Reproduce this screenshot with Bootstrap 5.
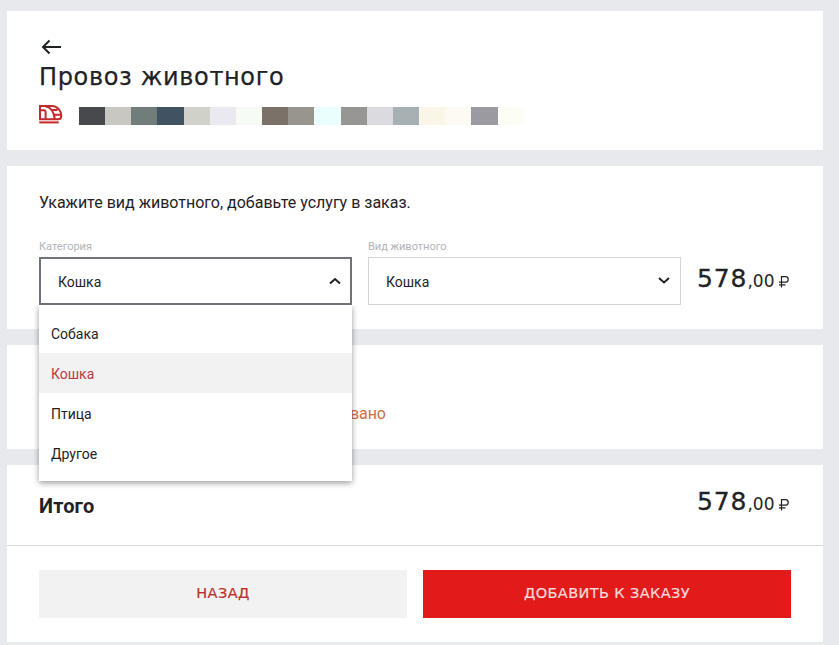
<!DOCTYPE html>
<html lang="ru">
<head>
<meta charset="utf-8">
<meta name="viewport" content="width=device-width, initial-scale=1">
<title>Провоз животного</title>
<link href="https://cdn.jsdelivr.net/npm/bootstrap@5.3.0/dist/css/bootstrap.min.css" rel="stylesheet">
<style>
body{background:#e8e9ed;color:#1f2225;font-family:Roboto,"Open Sans",sans-serif;font-size:16px;height:645px;overflow:hidden}
.page{width:816px;margin:11px 0 0 7px}
.panel{background:#fff;padding:0 32px}
.panel-head{height:139px;padding-top:26px}
.panel-form{height:163px;padding-top:25px}
.panel-note{height:104px;padding-top:57px}
.panel-total{height:81px;border-bottom:1px solid #d8d9db}
.panel-actions{height:96px;padding-top:24px}
.wide-font{font-family:"DejaVu Sans",sans-serif}
.back-link{width:24px;height:20px;color:#1f2225}
.back-link svg{display:block}
.title{font-size:24px;line-height:36px;letter-spacing:.65px;margin-top:2px;-webkit-text-stroke:.25px currentColor}
.train{margin-top:9px}
.swatches{height:18px;margin-top:12px;margin-left:16px}
.swatches span{width:26.17px}
.intro{line-height:24px}
.field-label{font-size:11px;line-height:16px;margin-bottom:2px;color:#b1b3b8}
.select-box{width:313px;height:48px;padding:3px 10px 0 17px;border:1px solid #d3d5d8;font-size:14px;background:#fff}
.select-box.open{border:2px solid #6f7279;padding:3px 9px 0 17px}
.select-box svg{margin-bottom:3px}
.fields{margin-top:24px}
.options{top:100%;left:0;width:313px;height:176px;padding:8px 0;background:#fff;box-shadow:0 2px 6px rgba(0,0,0,.4);z-index:5;font-size:14px;clip-path:inset(0 -12px -14px -12px)}
.options li{height:40px;line-height:42px;padding-left:12px}
.options .chosen{background:#f2f2f2;color:#b8393b}
.price{font-size:25px;line-height:32px;width:94px;white-space:nowrap;letter-spacing:.9px;-webkit-text-stroke:.3px currentColor}
.price .cents{font-size:17px;letter-spacing:0;-webkit-text-stroke:0}
.price svg{margin-left:5px;vertical-align:-2px}
.fields .price{padding-top:24px}
.panel-total .price{margin-bottom:5px}
.note{color:#cf6f3c;line-height:24px;padding-left:311px;letter-spacing:-.1px}
.total-label{font-size:20px;line-height:24px;padding-top:2px;letter-spacing:.15px}
.action{width:368px;height:48px;border-radius:0;border:0;font-size:14.5px;letter-spacing:.4px;padding:0 0 1px;-webkit-text-stroke:.2px currentColor}
.action-back,.action-back:hover{background:#f2f2f2;color:#b8312f}
.action-add,.action-add:hover{background:#e21a1a;color:#fbdcdc}
</style>
<script src="https://cdn.jsdelivr.net/npm/bootstrap@5.3.0/dist/js/bootstrap.bundle.min.js"></script>
</head>
<body>
<main class="page d-flex flex-column gap-3">
  <header class="panel panel-head">
    <a href="#" class="back-link d-block" aria-label="Назад"><svg width="24" height="20" viewBox="0 0 24 20" fill="none" stroke="currentColor" stroke-width="2"><path d="M22 10H4M10.500 3.500 4 10l6.500 6.500"/></svg></a>
    <h1 class="title wide-font mb-0 fw-normal">Провоз животного</h1>
    <div class="d-flex align-items-start">
      <svg class="train" width="24" height="21" viewBox="0 0 24 21" fill="none" stroke="#c4292b" stroke-width="2"><path d="M1 2h12.300c5.200 0 9 5.200 9 9.700 0 2.200-1.300 3.500-3.200 3.500H1zM1 6.200h3.700c1.300 0 1.900.7 1.900 2v7M6.500 2.200C12 3.200 15 8 15.800 15M11.500 6h7M14.800 10.800h7"/><path d="M.3 18.400h19.400"/></svg>
      <div class="swatches d-flex" id="swatches"></div>
    </div>
  </header>
  <section class="panel panel-form">
    <p class="intro mb-0">Укажите вид животного, добавьте услугу в заказ.</p>
    <div class="fields d-flex gap-3">
      <div>
        <div class="field-label">Категория</div>
        <div class="position-relative">
          <div class="select-box open d-flex align-items-center justify-content-between">Кошка
            <svg width="12" height="8" viewBox="0 0 12 8" fill="none" stroke="#1f2225" stroke-width="2"><path d="m1 6.500 5-4.500 5 4.500"/></svg>
          </div>
          <ul class="options list-unstyled position-absolute mb-0">
            <li>Собака</li>
            <li class="chosen">Кошка</li>
            <li>Птица</li>
            <li>Другое</li>
          </ul>
        </div>
      </div>
      <div>
        <div class="field-label">Вид животного</div>
        <div class="select-box d-flex align-items-center justify-content-between">Кошка
          <svg width="12" height="8" viewBox="0 0 12 8" fill="none" stroke="#1f2225" stroke-width="2"><path d="m1 1 5 4.500L11 1"/></svg>
        </div>
      </div>
      <div class="price wide-font">578<span class="cents">,00</span><svg width="10" height="13" viewBox="0 0 10 13" fill="none" stroke="#1f2225" stroke-width="1.200"><path d="M2.500 11.500V.7h4c1.700 0 2.700.9 2.700 2.700s-1 2.800-2.700 2.800H0M0 8.800h6.500"/></svg></div>
    </div>
  </section>
  <section class="panel panel-note"><div class="note">вано</div></section>
  <section>
    <div class="panel panel-total d-flex justify-content-between align-items-center">
      <strong class="total-label">Итого</strong>
      <div class="price wide-font">578<span class="cents">,00</span><svg width="10" height="13" viewBox="0 0 10 13" fill="none" stroke="#1f2225" stroke-width="1.200"><path d="M2.500 11.500V.7h4c1.700 0 2.700.9 2.700 2.700s-1 2.800-2.700 2.800H0M0 8.800h6.500"/></svg></div>
    </div>
    <div class="panel panel-actions d-flex gap-3">
      <button class="btn action action-back wide-font" type="button">НАЗАД</button>
      <button class="btn action action-add wide-font" type="button">ДОБАВИТЬ К ЗАКАЗУ</button>
    </div>
  </section>
</main>
<script>
["#48494d","#c9c7c2","#717d7b","#415363","#d0d2ca","#e9e9ef","#f6fbf6","#7b7169","#98948e","#ebfefe","#979694","#dadadf","#a7b1b3","#f9f5e7","#fdfaf4","#9b9aa0","#fcfef6"].forEach(function(c){
  var s=document.createElement("span");s.style.background=c;document.getElementById("swatches").append(s);
});
</script>
</body>
</html>
